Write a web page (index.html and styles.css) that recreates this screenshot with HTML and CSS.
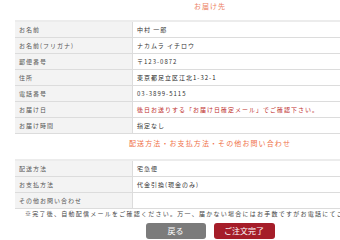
FILE: index.html
```
<!DOCTYPE html>
<html lang="ja">
<head>
<meta charset="utf-8">
<link rel="stylesheet" href="styles.css">
</head>
<body>
<div class="wrap">
  <h2 class="title">お届け先</h2>
  <table class="info">
    <tr><th>お名前</th><td>中村 一郎</td></tr>
    <tr><th>お名前(フリガナ)</th><td>ナカムラ イチロウ</td></tr>
    <tr><th>郵便番号</th><td>〒123-0872</td></tr>
    <tr><th>住所</th><td class="strong">東京都足立区江北1-32-1</td></tr>
    <tr><th>電話番号</th><td>03-3899-5115</td></tr>
    <tr><th>お届け日</th><td class="red">後日お送りする「お届け日確定メール」でご確認下さい。</td></tr>
    <tr><th>お届け時間</th><td>指定なし</td></tr>
  </table>
  <h3 class="sub">配送方法・お支払方法・その他お問い合わせ</h3>
  <table class="info">
    <tr><th>配送方法</th><td>宅急便</td></tr>
    <tr><th>お支払方法</th><td>代金引換(現金のみ)</td></tr>
    <tr><th>その他お問い合わせ</th><td></td></tr>
  </table>
  <p class="note">※完了後、自動配信メールをご確認ください。万一、届かない場合にはお手数ですがお電話にてご連絡ください。</p>
  <div class="buttons">
    <a class="btn back">戻る</a>
    <a class="btn done">ご注文完了</a>
  </div>
</div>
</body>
</html>
```
FILE: styles.css
```
html, body {
  margin: 0;
  padding: 0;
  overflow: hidden;
  background: #fff;
}
body {
  font-family: "Noto Sans CJK JP", "Noto Sans", sans-serif;
  color: #333;
}
.wrap {
  width: 390px;
  margin-left: 15px;
}
.title {
  margin: 0;
  height: 20px;
  line-height: 12px;
  font-size: 7px;
  font-weight: normal;
  letter-spacing: 1px;
  text-align: center;
  color: #ec7f62;
}
.info {
  width: 100%;
  border-collapse: collapse;
  border-top: 2px solid #ececec;
}
.info th, .info td {
  height: 15px;
  padding: 0 0 0 4px;
  border-bottom: 1px solid #dcdcdc;
  font-size: 6px;
  letter-spacing: 1px;
  text-align: left;
  vertical-align: middle;
}
.info th {
  width: 113px;
  background: #f3f3f3;
  font-weight: normal;
  color: #555;
  border-right: 1px solid #dcdcdc;
}
.info td {
  color: #333;
}
.info td.red {
  color: #c0302e;
}
.info td.strong {
  color: #222;
}
.sub {
  margin: 0;
  height: 25px;
  padding-top: 3px;
  box-sizing: border-box;
  line-height: 12px;
  font-size: 7px;
  font-weight: normal;
  letter-spacing: 1.1px;
  text-align: center;
  color: #ef7047;
}
.note {
  margin: 0;
  height: 11px;
  line-height: 10px;
  font-size: 6px;
  letter-spacing: 1.25px;
  text-align: center;
  white-space: nowrap;
  color: #444;
}
.buttons {
  display: flex;
  justify-content: center;
  gap: 8px;
  margin-top: 3px;
}
.btn {
  display: block;
  width: 60px;
  height: 16px;
  line-height: 16px;
  border-radius: 3px;
  text-align: center;
  font-size: 8px;
  color: #fff;
}
.back {
  background: #7b7b7b;
}
.done {
  width: 61px;
  background: #a51d29;
}
```
